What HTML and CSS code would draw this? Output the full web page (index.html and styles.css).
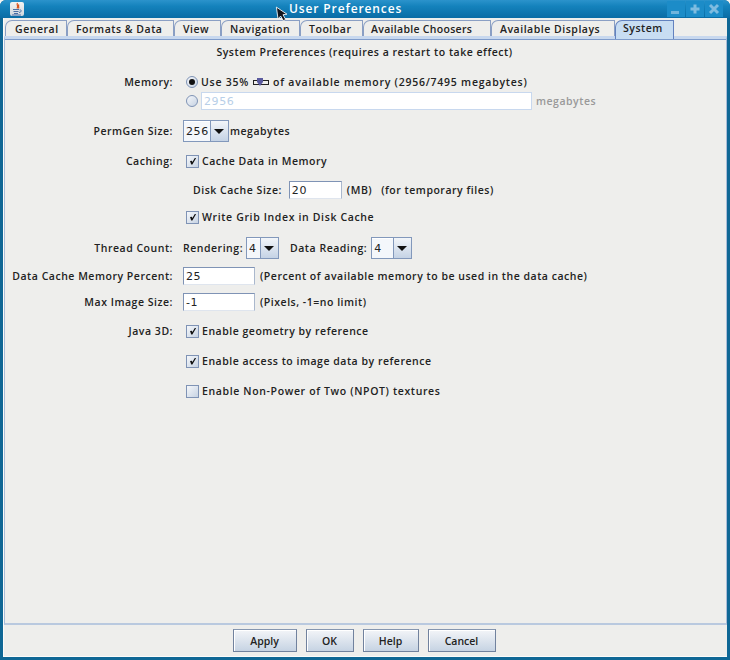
FILE: index.html
```html
<!DOCTYPE html>
<html lang="en">
<head>
<meta charset="utf-8">
<title>User Preferences</title>
<link rel="stylesheet" href="styles.css">
</head>
<body>
<div class="window">
  <header class="titlebar">
    <span class="app-icon">
      <svg width="14" height="14" viewBox="0 0 14 14"><path d="M7.5 1C6 3 9 4 7 6.5M9 2.5C7.5 4 9.5 5 8.5 6.5" fill="none" stroke="#d9541e" stroke-width="1.2"/><path d="M3 7.5h6M3.5 9.5h5M4 11.5h4M2 13h9" stroke="#4a6fa5" stroke-width="1.1" fill="none"/><path d="M9.5 8c2.5-.5 2.5 2-.5 2.5" stroke="#4a6fa5" fill="none"/></svg>
    </span>
    <span class="title">User Preferences</span>
    <div class="win-buttons">
      <span class="win-btn"><svg width="12" height="12" viewBox="0 0 12 12"><rect x="1" y="8" width="8" height="3" fill="#6fb4dc"/></svg></span>
      <span class="win-btn"><svg width="12" height="12" viewBox="0 0 12 12"><path d="M6 1.5v9M1.5 6h9" stroke="#7fbce0" stroke-width="3"/></svg></span>
      <span class="win-btn"><svg width="12" height="12" viewBox="0 0 12 12"><path d="M2 2l8 8M10 2l-8 8" stroke="#7fbce0" stroke-width="3"/></svg></span>
    </div>
  </header>
  <div class="client">
    <nav class="tabs">
      <span class="tab t-general">General</span>
      <span class="tab t-formats">Formats &amp; Data</span>
      <span class="tab t-view">View</span>
      <span class="tab t-nav">Navigation</span>
      <span class="tab t-toolbar">Toolbar</span>
      <span class="tab t-choosers">Available Choosers</span>
      <span class="tab t-displays">Available Displays</span>
      <span class="tab t-system active">System</span>
    </nav>
    <main class="panel">
      <h1 class="heading">System Preferences (requires a restart to take effect)</h1>

      <div class="row g0">
        <span class="label">Memory:</span>
        <div class="value spaced"><span class="radio on"></span><span class="opt">Use 35%</span>
          <svg class="slider" width="16" height="9" viewBox="0 0 16 9"><rect x="0.5" y="2.5" width="15" height="4" fill="#eeeeec" stroke="#222"/><path d="M4 0h6v4L7 8 4 4z" fill="#5a5a9e"/></svg>
          <span>of available memory (2956/7495 megabytes)</span></div>
      </div>
      <div class="row g1">
        <span class="label"></span>
        <div class="value"><span class="radio"></span><span class="field wide disabled">2956</span><span class="muted">megabytes</span></div>
      </div>
      <div class="row g12">
        <span class="label">PermGen Size:</span>
        <div class="value tight"><span class="combo c-perm"><span class="combo-val">256</span><span class="combo-arrow"></span></span><span>megabytes</span></div>
      </div>
      <div class="row g12">
        <span class="label">Caching:</span>
        <div class="value"><span class="check on"></span><span class="opt">Cache Data in Memory</span></div>
      </div>
      <div class="row g11">
        <span class="label"></span>
        <div class="value disk"><span>Disk Cache Size:</span><span class="field f-disk">20</span><span class="unit">(MB)</span><span>(for temporary files)</span></div>
      </div>
      <div class="row g9">
        <span class="label"></span>
        <div class="value"><span class="check on"></span><span class="opt opt-wide">Write Grib Index in Disk Cache</span></div>
      </div>
      <div class="row g13">
        <span class="label">Thread Count:</span>
        <div class="value threads"><span>Rendering:</span><span class="combo c-thread"><span class="combo-val">4</span><span class="combo-arrow"></span></span><span class="read-label">Data Reading:</span><span class="combo c-thread2"><span class="combo-val">4</span><span class="combo-arrow"></span></span></div>
      </div>
      <div class="row g10">
        <span class="label">Data Cache Memory Percent:</span>
        <div class="value"><span class="field f-num">25</span><span class="note">(Percent of available memory to be used in the data cache)</span></div>
      </div>
      <div class="row g8">
        <span class="label">Max Image Size:</span>
        <div class="value"><span class="field f-num">-1</span><span class="note">(Pixels, -1=no limit)</span></div>
      </div>
      <div class="row g11">
        <span class="label">Java 3D:</span>
        <div class="value"><span class="check on"></span><span class="opt">Enable geometry by reference</span></div>
      </div>
      <div class="row g12">
        <span class="label"></span>
        <div class="value"><span class="check on"></span><span class="opt">Enable access to image data by reference</span></div>
      </div>
      <div class="row g12">
        <span class="label"></span>
        <div class="value"><span class="check"></span><span class="opt opt-wide">Enable Non-Power of Two (NPOT) textures</span></div>
      </div>
    </main>
    <footer class="actions">
      <button class="btn b-apply">Apply</button>
      <button class="btn b-ok">OK</button>
      <button class="btn b-help">Help</button>
      <button class="btn b-cancel">Cancel</button>
    </footer>
  </div>
  <svg class="cursor" width="14" height="18" viewBox="0 0 14 18"><path d="M1.5 1 L1.5 13 L4.5 10.5 L6.5 15.5 L9 14.5 L7 9.5 L11 9.5 Z" transform="rotate(-8 2 2)" fill="#11141c" stroke="#fff" stroke-width="0.8"/></svg>
</div>
</body>
</html>
```
FILE: styles.css
```css
* { box-sizing: border-box; }
html, body { margin: 0; padding: 0; background: #f4f4f2; }
body { width: 730px; height: 660px; overflow: hidden; }
.window {
  position: relative; width: 730px; height: 660px;
  background: #0f6795; border-radius: 6px 6px 0 0;
  padding: 0 3px 3px; display: flex; flex-direction: column;
  font: 600 10.5px "Open Sans", sans-serif; letter-spacing: .52px; color: #222;
}
.titlebar {
  height: 18px; margin: 0 -3px; padding: 0 7px 0 10px; flex: none;
  display: flex; align-items: center; position: relative;
  border-radius: 6px 6px 0 0;
  background: linear-gradient(#2b93cc, #1482bc 35%, #0a6ca5);
}
.app-icon {
  width: 14px; height: 14px; background: linear-gradient(#f4f4f2, #cfd6dd);
  border-radius: 2px; display: flex;
}
.title {
  position: absolute; left: 289px; top: 1px; color: #fff;
  font-size: 12px; letter-spacing: .88px; line-height: 16px; font-weight: 600;
}
.win-buttons { margin-left: auto; display: flex; gap: 1px; }
.win-btn {
  width: 18px; height: 16px; background: #1c8cc8;
  display: flex; align-items: center; justify-content: center;
}
.client {
  flex: 1; min-height: 0; background: #eeeeec; display: flex; flex-direction: column;
  border-bottom: 1px solid #fbfbfa; border-left: 1px solid #fbfbfa;
}
.tabs { display: flex; height: 18px; padding: 2px 0 0 1px; flex: none; position: relative; }
.tab {
  border: 1px solid #8a9fc4; border-bottom: 0;
  border-top-left-radius: 7px;
  display: flex; align-items: center; padding-left: 8px;
  height: 16px; background: #eeeeec;
}
.t-general { width: 62px; padding-left: 9px; }
.t-formats { width: 107px; }
.t-view { width: 47px; }
.t-nav { width: 79px; }
.t-toolbar { width: 63px; }
.t-choosers { width: 128px; padding-left: 7px; letter-spacing: .3px; }
.t-displays { width: 124px; }
.t-system { width: 59px; padding-left: 7px; }
.tab.active { background: #c8ddf2; border-color: #6382bf; height: 19px; align-items: flex-start; z-index: 1; }
.panel {
  flex: 1; min-height: 0; display: flex; flex-direction: column;
  border-top: 3px solid #c8d8ee; border-bottom: 2px solid #b9c9df;
  border-left: 1px solid #a9bcd8; border-right: 1px solid #a9bcd8;
  box-shadow: inset 0 1px 0 #7f9ccb;
}
.heading {
  font: inherit; margin: 6px 0 0; text-align: center; height: 14px; line-height: 14px; padding-right: 2px;
}
.row {
  display: grid; grid-template-columns: 168px 1fr; column-gap: 10px;
  align-items: center; height: 18px; white-space: nowrap;
}
.g0 { margin-top: 14px; } .g1 { margin-top: 1px; } .g8 { margin-top: 8px; }
.g9 { margin-top: 9px; } .g10 { margin-top: 10px; } .g11 { margin-top: 11px; }
.g12 { margin-top: 12px; } .g13 { margin-top: 13px; }
.label { text-align: right; }
.value { display: flex; align-items: center; height: 18px; }
.spaced { letter-spacing: .76px; }
.opt { margin-left: 3px; }
.opt-wide { letter-spacing: .64px; }
.slider { margin: 0 4px; flex: none; }
.radio {
  width: 12px; height: 12px; margin-left: 3px; border-radius: 50%; border: 1px solid #7f93b5; flex: none;
  background: linear-gradient(135deg, #f5f7fa, #c7d3e3); position: relative; display: block;
}
.radio.on::after {
  content: ""; position: absolute; left: 2px; top: 2px; width: 6px; height: 6px;
  border-radius: 50%; background: #111;
}
.check {
  width: 13px; height: 13px; margin-left: 3px; border: 1px solid #7f93b5; flex: none;
  background: linear-gradient(135deg, #f5f7fa, #c7d3e3); position: relative; display: block;
}
.check.on::after {
  content: ""; position: absolute; left: 3px; top: 2px; width: 6px; height: 7px;
  background: #111; clip-path: polygon(0 50%, 30% 45%, 40% 65%, 85% 0, 100% 10%, 40% 100%, 20% 100%);
}
.field {
  display: flex; align-items: center; height: 18px; padding-left: 2px;
  border: 1px solid #7f93b5; border-bottom-color: #dfe5ee; border-right-color: #aab8cd; background: #fff;
  font: 11px "DejaVu Sans", sans-serif; letter-spacing: .6px; color: #222; flex: none;
}
.field.wide { width: 331px; margin-left: 3px; margin-right: 4px; border: 1px solid #c8d8ee; }
.field.disabled { color: #b8cfe8; }
.muted { color: #999; }
.f-disk { width: 53px; margin: 0 5px 0 7px; }
.unit { margin-right: 9px; }
.disk { padding-left: 10px; }
.f-num { width: 72px; }
.note { margin-left: 5px; }
.tight { gap: 1px; }
.combo {
  display: flex; height: 22px; border: 1px solid #8298bb; background: #eeeeec; flex: none;
}
.combo-val { flex: 1; padding-left: 2px; display: flex; align-items: center; background: #f4f7fb; font: 11px "DejaVu Sans", sans-serif; letter-spacing: .6px; box-shadow: inset 0 1px 0 #fff; }
.combo-arrow {
  width: 18px; flex: none; border-left: 1px solid #8298bb;
  background: linear-gradient(#f2f5f9, #c5d3e5); position: relative;
}
.combo-arrow::after {
  content: ""; position: absolute; left: 3px; top: 8px;
  border: 5px solid transparent; border-top-color: #111; border-bottom: 0;
}
.c-perm { width: 46px; }
.c-thread { width: 33px; margin-left: 3px; }
.c-thread2 { width: 41px; margin-left: 4px; }
.read-label { margin-left: 11px; }
.actions {
  height: 31px; flex: none; display: flex; align-items: flex-start; justify-content: center;
  gap: 9px; padding-top: 4px; padding-right: 3px;
}
.btn {
  height: 23px; padding: 0; border: 1px solid #71829e; border-top-color: #8596b0;
  background: linear-gradient(#f3f5f8, #c6d3e3);
  font: inherit; color: #222; box-shadow: inset 1px 1px 0 #fff;
}
.b-apply { width: 64px; }
.b-ok { width: 48px; }
.b-help { width: 56px; }
.b-cancel { width: 68px; }
.cursor { position: absolute; left: 275px; top: 6px; }
```
